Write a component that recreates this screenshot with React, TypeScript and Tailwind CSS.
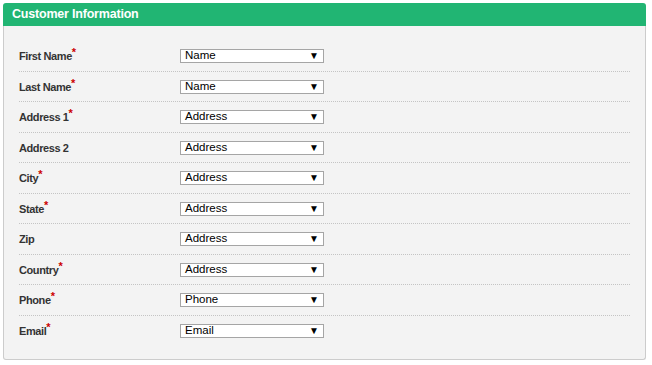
import React from 'react';

interface Field {
  label: string;
  value: string;
  required: boolean;
}

const fields: Field[] = [
  { label: 'First Name', value: 'Name', required: true },
  { label: 'Last Name', value: 'Name', required: true },
  { label: 'Address 1', value: 'Address', required: true },
  { label: 'Address 2', value: 'Address', required: false },
  { label: 'City', value: 'Address', required: true },
  { label: 'State', value: 'Address', required: true },
  { label: 'Zip', value: 'Address', required: false },
  { label: 'Country', value: 'Address', required: true },
  { label: 'Phone', value: 'Phone', required: true },
  { label: 'Email', value: 'Email', required: true },
];

const FakeSelect: React.FC<{ value: string }> = ({ value }) => (
  <div className="flex h-[14px] w-[144px] items-center justify-between border border-[#a5a5a5] bg-white pl-[4px] pr-[4px] text-[11.5px] leading-none text-black">
    <span>{value}</span>
    <span className="text-[10px]">▼</span>
  </div>
);

const App: React.FC = () => {
  return (
    <div className="min-h-[365px] w-[652px] bg-white p-[3px] font-['Liberation_Sans',Arial,sans-serif]">
      <div className="w-[643px]">
        {/* Header */}
        <div className="flex h-[23px] items-center rounded-t-[3px] bg-[#21b573] pl-[9px] text-[12.5px] font-bold tracking-[-0.2px] text-white">
          Customer Information
        </div>

        {/* Body */}
        <div className="h-[334px] rounded-b-[3px] border border-t-0 border-[#cccccc] bg-[#f3f3f3] pl-[15px] pr-[15px] pt-[15px]">
          {fields.map((f, i) => (
            <div
              key={f.label}
              className={
                i < fields.length - 1
                  ? 'flex h-[30.5px] items-start border-b border-dotted border-[#c4c4c4] pt-[8px]'
                  : 'flex h-[30.5px] items-start pt-[8px]'
              }
            >
              <div className="w-[161px] pt-[2px] text-[11px] font-bold leading-none tracking-[-0.4px] text-[#333333]">
                {f.label}
                <>
                  {f.required && (
                    <span className="relative -top-[4px] text-[11px] text-[#cc0000]">*</span>
                  )}
                </>
              </div>
              <FakeSelect value={f.value} />
            </div>
          ))}
        </div>
      </div>
    </div>
  );
};

export default App;
